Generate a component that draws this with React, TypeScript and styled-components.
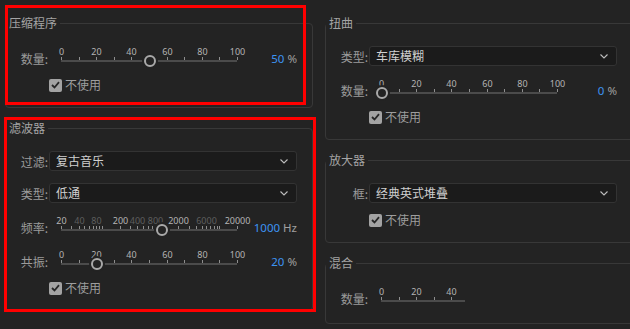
import React from 'react';
import styled, { createGlobalStyle } from 'styled-components';

const GlobalStyle = createGlobalStyle`
  html, body {
    margin: 0;
    padding: 0;
    background: #232323;
  }
  body {
    font-family: "Noto Sans", "Noto Sans CJK SC", sans-serif;
  }
`;

const TRACK_START = 12;
const TRACK_LEN = 176;

const Page = styled.div`
  position: relative;
  width: 630px;
  height: 329px;
  overflow: hidden;
  box-sizing: border-box;
  background: #232323;
  padding: 15px 0 0 5px;
  display: grid;
  grid-template-columns: 308px 320px;
  column-gap: 12px;
  align-items: start;
`;

const Column = styled.div`
  display: flex;
  flex-direction: column;
  gap: 12px;
  min-width: 0;
`;

const Group = styled.fieldset`
  margin: 0;
  padding: 15px 0 15px 0;
  min-width: 0;
  border: 1px solid #383838;
  border-radius: 4px;
`;

const Legend = styled.legend`
  margin: 0;
  padding: 0 3px;
  font: 12px/16px "Noto Sans CJK SC", sans-serif;
  color: #a4a4a4;
`;

const Body = styled.div`
  display: flex;
  flex-direction: column;
  gap: 12px;
`;

const Row = styled.div<{ $tight?: boolean }>`
  display: grid;
  grid-template-columns: 42px 248px;
  column-gap: 1px;
  align-items: end;
  margin-top: ${(p) => (p.$tight ? '-2px' : '0')};
`;

const Label = styled.div`
  text-align: right;
  font: 12px/18px "Noto Sans CJK SC", sans-serif;
  color: #9b9b9b;
  white-space: nowrap;
`;

const SelectBox = styled.div`
  height: 20px;
  box-sizing: border-box;
  border: 1px solid #333333;
  border-radius: 3px;
  background: #1b1b1b;
  display: flex;
  align-items: center;
  justify-content: space-between;
  padding: 0 8px 0 6px;
  font: 12px/18px "Noto Sans CJK SC", sans-serif;
  color: #d0d0d0;
`;

const Chevron = styled.svg`
  width: 8px;
  height: 5px;
  flex: none;
`;

const Control = styled.div`
  display: flex;
  align-items: flex-end;
`;

const Clip = styled.div<{ $width?: number }>`
  width: ${(p) => (p.$width ? `${p.$width}px` : '200px')};
  overflow: ${(p) => (p.$width ? 'hidden' : 'visible')};
  flex: none;
`;

const Scale = styled.div`
  position: relative;
  width: 200px;
  height: 22px;
`;

const TickLabel = styled.span<{ $dim?: boolean }>`
  position: absolute;
  top: 0;
  transform: translateX(-50%);
  font: 9px/11px "Noto Sans", sans-serif;
  color: ${(p) => (p.$dim ? '#5e5e5e' : '#b4b4b4')};
  white-space: nowrap;
`;

const TickMark = styled.span`
  position: absolute;
  top: 11px;
  width: 1px;
  height: 3px;
  background: #8e8e8e;
`;

const Track = styled.div`
  position: absolute;
  left: ${TRACK_START}px;
  top: 14px;
  width: ${TRACK_LEN}px;
  height: 2px;
  background: #4b4b4b;
`;

const Thumb = styled.span`
  position: absolute;
  top: 9px;
  width: 12px;
  height: 12px;
  box-sizing: border-box;
  border: 2px solid #a9a9a9;
  border-radius: 50%;
  background: #232323;
  box-shadow: 0 0 0 2px #232323;
  transform: translateX(-50%);
`;

const Value = styled.div`
  flex: 1;
  text-align: right;
  font: 11.5px/18px "Noto Sans", sans-serif;
  color: #3d93f2;
  white-space: nowrap;
`;

const Unit = styled.span`
  margin-left: 3px;
  color: #a0a0a0;
`;

const CheckRow = styled.label`
  display: flex;
  align-items: center;
  gap: 3px;
  height: 14px;
  font: 12px/14px "Noto Sans CJK SC", sans-serif;
  color: #9d9d9d;
`;

const Box = styled.span`
  width: 13px;
  height: 13px;
  border-radius: 2px;
  background: #a3a3a3;
  display: flex;
  align-items: center;
  justify-content: center;
`;

const Marker = styled.div<{ $x: number; $y: number; $w: number; $h: number }>`
  position: absolute;
  left: ${(p) => p.$x}px;
  top: ${(p) => p.$y}px;
  width: ${(p) => p.$w}px;
  height: ${(p) => p.$h}px;
  box-sizing: border-box;
  border: 3px solid #ff0000;
  pointer-events: none;
`;

type Mark = { f: number; text?: string; dim?: boolean };

const px = (f: number) => Math.round(TRACK_START + f * TRACK_LEN);

const linear: Mark[] = Array.from({ length: 11 }, (_, i) => ({
  f: i / 10,
  text: i % 2 === 0 ? String(i * 10) : undefined,
}));
const linearStart = linear.filter((m) => m.f <= 0.45);

const logF = (v: number) => (Math.log10(v) - Math.log10(20)) / 3;
const freqTicks: Mark[] = (() => {
  const out: Mark[] = [];
  for (const decade of [10, 100, 1000, 10000]) {
    for (let k = 1; k <= 9; k++) {
      const v = decade * k;
      if (v >= 20 && v <= 20000) out.push({ f: logF(v) });
    }
  }
  out.push({ f: 1 });
  return out;
})();
const freqLabels: Mark[] = [
  { f: logF(20), text: '20' },
  { f: logF(40), text: '40', dim: true },
  { f: logF(80), text: '80', dim: true },
  { f: logF(200), text: '200' },
  { f: logF(400), text: '400', dim: true },
  { f: logF(800), text: '800', dim: true },
  { f: logF(2000), text: '2000' },
  { f: logF(6000), text: '6000', dim: true },
  { f: 1, text: '20000' },
];

interface ISliderProps {
  label: string;
  ticks?: Mark[];
  labels?: Mark[];
  thumb?: number;
  value?: string;
  unit?: string;
  clip?: number;
}

const Slider = ({ label, ticks = linear, labels = linear, thumb, value, unit, clip }: ISliderProps) => (
  <Row>
    <Label>{label}</Label>
    <Control>
      <Clip $width={clip}>
        <Scale>
          <Track />
          {ticks.map((t, i) => (
            <TickMark key={`t${i}`} style={{ left: px(t.f) }} />
          ))}
          {labels
            .filter((l) => l.text)
            .map((l) => (
              <TickLabel key={l.text} $dim={l.dim} style={{ left: px(l.f) + 0.5 }}>
                {l.text}
              </TickLabel>
            ))}
          {thumb !== undefined && <Thumb style={{ left: px(thumb) + 0.5 }} />}
        </Scale>
      </Clip>
      {value && (
        <Value>
          {value}
          <Unit>{unit}</Unit>
        </Value>
      )}
    </Control>
  </Row>
);

const Select = ({ label, value }: { label: string; value: string }) => (
  <Row>
    <Label>{label}</Label>
    <SelectBox>
      <span>{value}</span>
      <Chevron viewBox="0 0 8 5">
        <polyline points="0.5,0.5 4,4 7.5,0.5" fill="none" stroke="#bdbdbd" strokeWidth="1.1" />
      </Chevron>
    </SelectBox>
  </Row>
);

const Bypass = () => (
  <Row $tight>
    <span />
    <CheckRow>
      <Box>
        <svg width="9" height="8" viewBox="0 0 9 8">
          <polyline points="1,4 3.5,6.5 8,1.2" fill="none" stroke="#262626" strokeWidth="1.8" />
        </svg>
      </Box>
      不使用
    </CheckRow>
  </Row>
);

const App = () => (
  <>
    <GlobalStyle />
    <Page>
      <Column>
        <Group>
          <Legend>压缩程序</Legend>
          <Body>
            <Slider label="数量:" thumb={0.5} value="50" unit="%" />
            <Bypass />
          </Body>
        </Group>
        <Group>
          <Legend>滤波器</Legend>
          <Body>
            <Select label="过滤:" value="复古音乐" />
            <Select label="类型:" value="低通" />
            <Slider label="频率:" ticks={freqTicks} labels={freqLabels} thumb={logF(1000)} value="1000" unit="Hz" />
            <Slider label="共振:" thumb={0.2} value="20" unit="%" />
            <Bypass />
          </Body>
        </Group>
      </Column>
      <Column>
        <Group>
          <Legend>扭曲</Legend>
          <Body>
            <Select label="类型:" value="车库模糊" />
            <Slider label="数量:" thumb={0} value="0" unit="%" />
            <Bypass />
          </Body>
        </Group>
        <Group>
          <Legend>放大器</Legend>
          <Body>
            <Select label="框:" value="经典英式堆叠" />
            <Bypass />
          </Body>
        </Group>
        <Group>
          <Legend>混合</Legend>
          <Body>
            <Slider label="数量:" ticks={linearStart} labels={linearStart} clip={96} />
          </Body>
        </Group>
      </Column>
      <Marker $x={5} $y={5} $w={301} $h={100} />
      <Marker $x={4} $y={117} $w={312} $h={195} />
    </Page>
  </>
);

export default App;
